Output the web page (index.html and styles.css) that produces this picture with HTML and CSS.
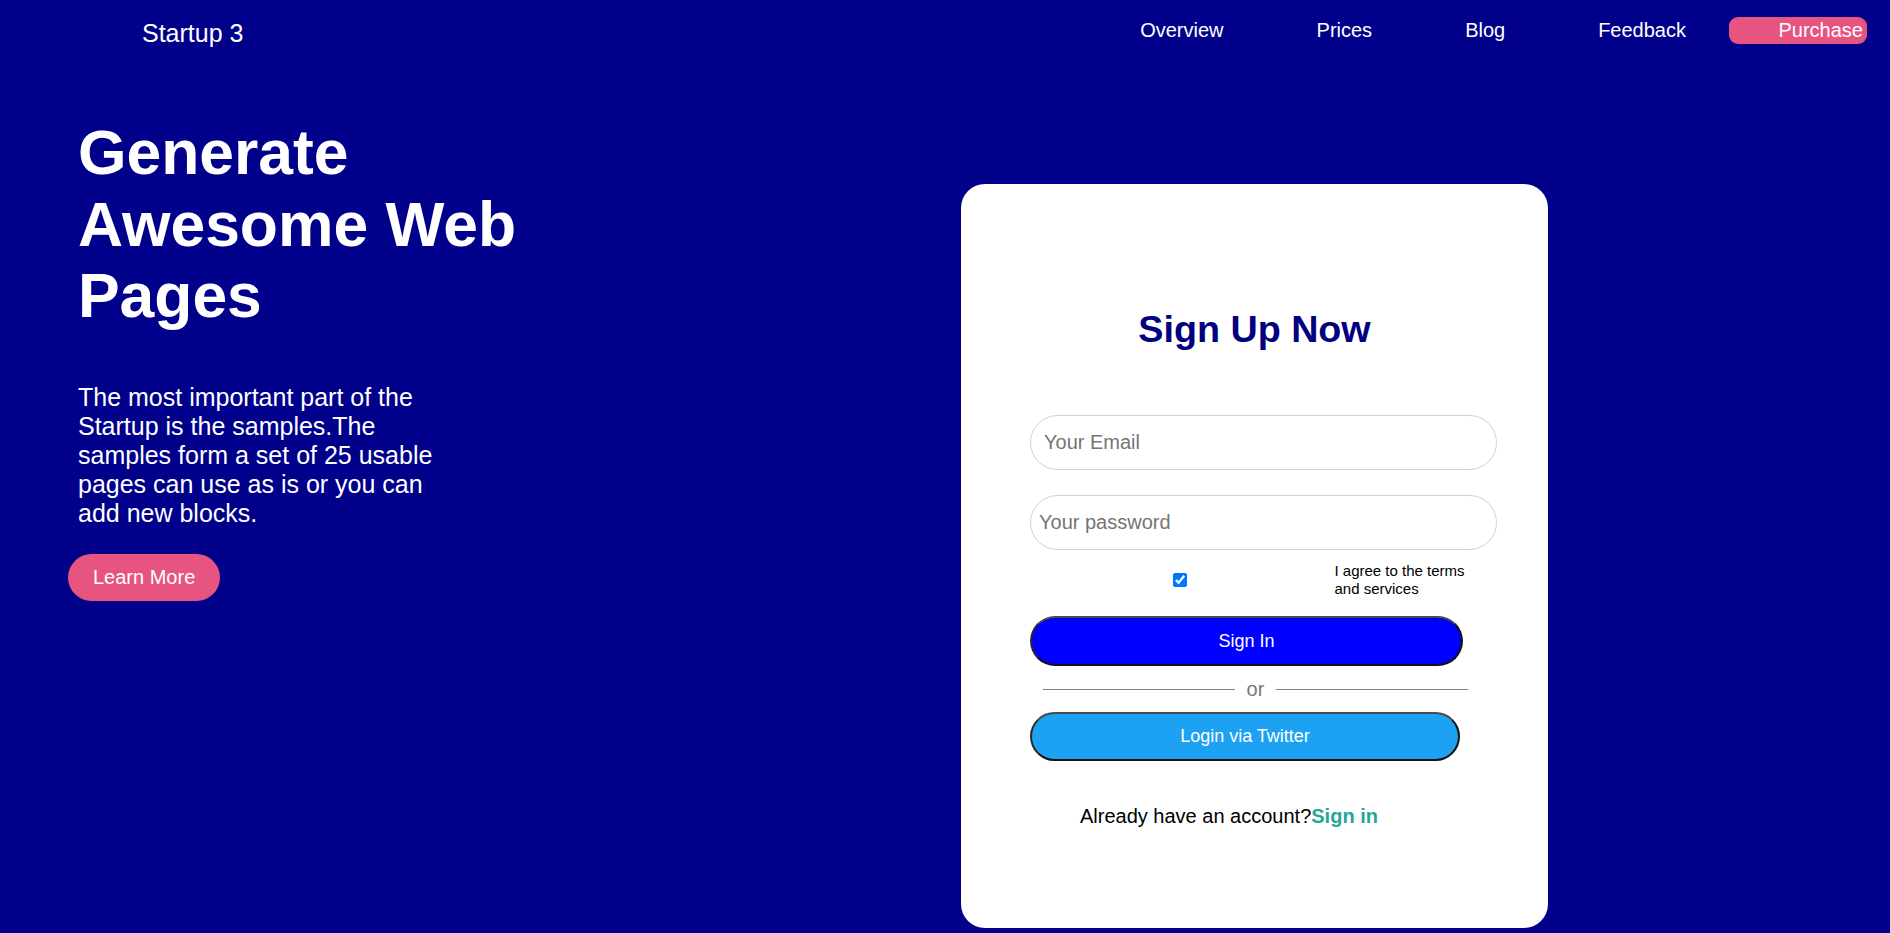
FILE: index.html
```html
<!DOCTYPE html>
<html lang="en">
<head>
<meta charset="utf-8">
<title>Startup 3</title>
<link rel="stylesheet" href="styles.css">
</head>
<body>
<header class="topbar">
  <div class="brand">Startup 3</div>
  <nav class="nav">
    <div class="nav-links">
      <a class="nav-link" href="#">Overview</a>
      <a class="nav-link" href="#">Prices</a>
      <a class="nav-link" href="#">Blog</a>
      <a class="nav-link" href="#">Feedback</a>
    </div>
    <a class="nav-btn" href="#">Purchase</a>
  </nav>
</header>
<main class="hero">
  <section class="hero-copy">
    <h1 class="hero-title">Generate Awesome Web Pages</h1>
    <p class="hero-text">The most important part of the Startup is the samples.The samples form a set of 25 usable pages can use as is or you can add new blocks.</p>
    <a class="learn-btn" href="#">Learn More</a>
  </section>
  <section class="card">
    <h2 class="card-title">Sign Up Now</h2>
    <form class="form">
      <input class="field field-email" type="email" placeholder="Your Email">
      <input class="field field-pass" type="password" placeholder="Your password">
      <label class="agree">
        <input class="agree-box" type="checkbox" checked>
        <span class="agree-text">I agree to the terms and services</span>
      </label>
      <button class="btn btn-signin" type="button">Sign In</button>
      <div class="divider"><span class="divider-line"></span><span class="divider-or">or</span><span class="divider-line"></span></div>
      <button class="btn btn-twitter" type="button">Login via Twitter</button>
      <p class="already">Already have an account?<a class="signin-link" href="#">Sign in</a></p>
    </form>
  </section>
</main>
</body>
</html>
```

FILE: styles.css
```css
* { box-sizing: border-box; }

html, body {
  margin: 0;
  padding: 0;
}

body {
  background: #00008b;
  font-family: "Liberation Sans", Arial, sans-serif;
  color: #fff;
  min-height: 933px;
}

a { text-decoration: none; color: inherit; }

/* header */
.topbar {
  display: flex;
  align-items: flex-start;
  height: 116px;
  padding: 17px 23px 0 142px;
}

.brand {
  font-size: 25px;
  line-height: 28.75px;
  margin-top: 2.3px;
}

.nav {
  margin-left: auto;
  display: flex;
  align-items: flex-start;
}

.nav-links {
  display: flex;
  gap: 93px;
  margin-top: 2px;
}

.nav-link {
  font-size: 20px;
  line-height: 23px;
  color: #fff;
}

.nav-btn {
  margin-left: 42.5px;
  font-size: 20px;
  line-height: 23px;
  padding: 2px 4px 2px 50px;
  background: #e75480;
  border-radius: 9px;
  color: #fff;
}

/* hero */
.hero {
  display: flex;
  align-items: flex-start;
}

.hero-copy {
  flex: 0 0 961px;
  padding-left: 68px;
  display: flex;
  flex-direction: column;
  align-items: flex-start;
}

.hero-title {
  margin: 1px 0 0 10px;
  width: 480px;
  font-size: 62.4px;
  font-weight: bold;
  line-height: 71.7px;
}

.hero-text {
  margin: 51px 0 0 10px;
  width: 375px;
  font-size: 25px;
  line-height: 29px;
}

.learn-btn {
  margin-top: 25.5px;
  display: inline-block;
  font-size: 20px;
  line-height: 23px;
  padding: 12px 25px;
  background: #e75480;
  border-radius: 24px;
  color: #fff;
}

/* card */
.card {
  margin-top: 68px;
  width: 587px;
  height: 744px;
  background: #fff;
  border-radius: 24px;
  padding-top: 124.3px;
  color: #000;
}

.card-title {
  margin: 0;
  text-align: center;
  font-size: 37.7px;
  line-height: 43.7px;
  font-weight: bold;
  color: #000080;
}

.form {
  margin-left: 69px;
  width: 467px;
  display: flex;
  flex-direction: column;
  align-items: flex-start;
}

.field {
  display: block;
  width: 467px;
  height: 55px;
  border: 1px solid #d0d0d0;
  border-radius: 28px;
  font-family: "Liberation Sans", Arial, sans-serif;
  font-size: 20px;
  color: #222;
  background: #fff;
  outline: none;
}

.field::placeholder { color: #757575; }

.field-email {
  margin-top: 63.3px;
  padding: 0 13px;
}

.field-pass {
  margin-top: 25px;
  padding: 0 8px;
}

.agree {
  margin-top: 12px;
  display: flex;
  align-items: center;
  width: 100%;
}

.agree-box {
  margin: 0 0 0 142.5px;
  width: 14px;
  height: 14px;
  flex: 0 0 auto;
}

.agree-text {
  margin-left: 148px;
  width: 145px;
  font-size: 15px;
  line-height: 17.25px;
  color: #000;
}

.btn {
  display: block;
  border-style: solid;
  border-width: 2px;
  border-color: #4a4a4a #111 #111 #2a2a2a;
  border-radius: 26px;
  color: #fff;
  font-family: "Liberation Sans", Arial, sans-serif;
  font-size: 18px;
  line-height: 20.7px;
  text-align: center;
  padding: 0;
  cursor: pointer;
}

.btn-signin {
  margin-top: 19.5px;
  width: 433px;
  height: 50px;
  background: #0000ff;
}

.divider {
  margin: 11.6px 0 0 13px;
  width: 425px;
  height: 23px;
  display: flex;
  align-items: center;
  gap: 12px;
}

.divider-line {
  flex: 1 1 0;
  height: 1px;
  background: #808080;
}

.divider-or {
  font-size: 20px;
  line-height: 23px;
  color: #777;
}

.btn-twitter {
  margin-top: 11.4px;
  width: 430px;
  height: 49px;
  background: #1da1f2;
}

.already {
  margin: 43.3px 0 0 50px;
  font-size: 20px;
  line-height: 23px;
  color: #000;
}

.signin-link {
  font-weight: bold;
  color: #26a69a;
}
```
